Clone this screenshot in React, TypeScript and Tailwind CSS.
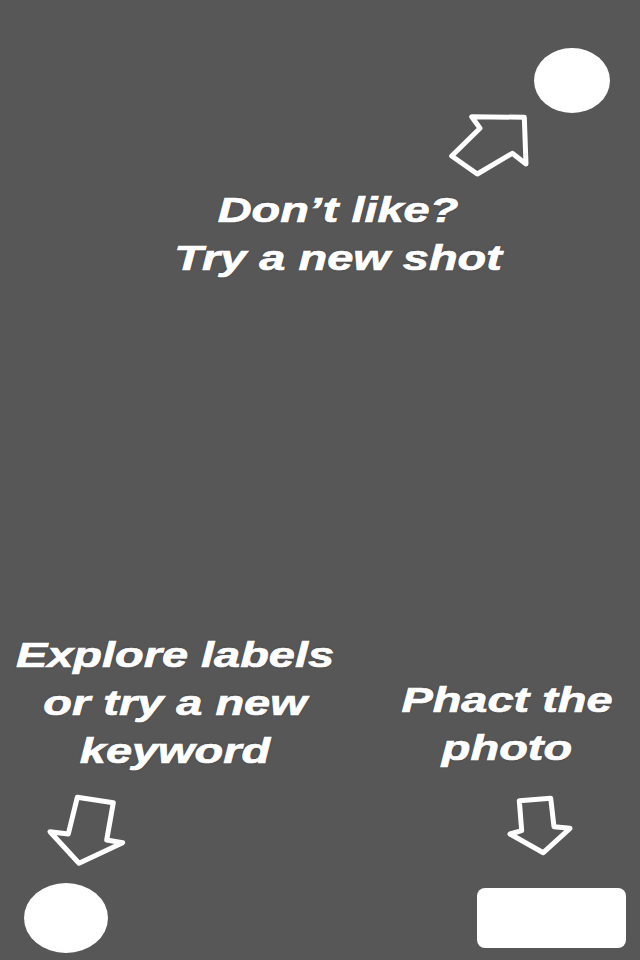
import React from "react";

const textCls =
  "text-white font-bold italic text-[34.5px] leading-[48px] text-center scale-x-[1.36] [font-family:'Liberation_Sans',Arial,sans-serif] [-webkit-text-stroke:0.7px_white] [text-shadow:0_0_2px_rgba(0,0,0,0.35)]";

const Arrow = ({ w, h, points }: { w: number; h: number; points: string }) => (
  <svg width={w} height={h} viewBox={`0 0 ${w} ${h}`} className="block shrink-0">
    <polygon points={points} fill="none" stroke="white" strokeWidth={5} strokeLinejoin="round" />
  </svg>
);

const App = () => {
  return (
    <div className="w-[640px] h-[960px] bg-[#575757] flex flex-col overflow-hidden">
      {/* top hint: new shot */}
      <div className="self-end mt-[48px] mr-[30px] w-[76px] h-[65px] rounded-[50%] bg-white" />
      <div className="ml-[440px] -mt-[3px]">
        <Arrow
          w={100}
          h={70}
          points="31.7,6.7 84.3,7.3 86,54 72.3,43.3 37.3,64 11.7,46 40,18.3"
        />
      </div>
      <div className={`ml-[36px] mt-[6px] ${textCls}`}>
        <div>Don’t like?</div>
        <div>Try a new shot</div>
      </div>

      {/* bottom hints */}
      <div className="mt-auto flex items-end">
        <div className="w-[350px] flex flex-col">
          <div className={textCls}>
            <div>Explore labels</div>
            <div>or try a new</div>
            <div>keyword</div>
          </div>
          <div className="ml-[40px] mt-[13px]">
            <Arrow
              w={92}
              h={82}
              points="37.3,9.3 73.3,14.7 66.7,52 82.7,54.7 39,75.3 10,43.7 28.3,46"
            />
          </div>
          <div className="ml-[24px] mt-[13px] mb-[7px] w-[84px] h-[70px] rounded-[50%] bg-white" />
        </div>
        <div className="flex-1 flex flex-col">
          <div className={`ml-[24px] ${textCls}`}>
            <div>Phact the</div>
            <div>photo</div>
          </div>
          <div className="ml-[150px] mt-[18px]">
            <Arrow
              w={80}
              h={70}
              points="19.3,10.7 50.7,8.3 54,36.7 70,38.3 43.3,62.7 10,44 21.7,40.7"
            />
          </div>
          <div className="ml-[127px] mt-[28px] mb-[12px] w-[149px] h-[60px] rounded-[8px] bg-white" />
        </div>
      </div>
    </div>
  );
};

export default App;
